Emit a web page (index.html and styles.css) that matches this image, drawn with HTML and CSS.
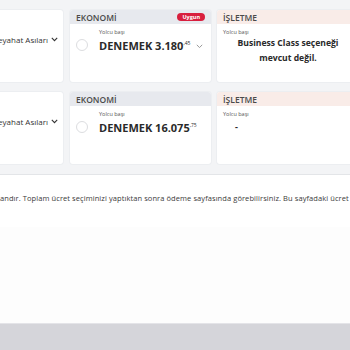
FILE: index.html
```html
<!DOCTYPE html>
<html lang="tr">
<head>
    <meta charset="UTF-8">
    <title>Uçuş Seçimi</title>
    <link rel="stylesheet" href="styles.css">
</head>
<body>
    <div class="fares">
        <div class="fare-row">
            <div class="flight-card">
                <span class="extras">Seyahat Asıları</span>
                <svg class="chev dark" width="7" height="5" viewBox="0 0 7 5"><path d="M0.8 0.8 L3.5 3.6 L6.2 0.8" fill="none" stroke="#333" stroke-width="1.1"/></svg>
            </div>
            <div class="fare-card">
                <div class="fare-head economy">
                    <span>EKONOMİ</span>
                    <span class="badge">Uygun</span>
                </div>
                <div class="fare-body">
                    <span class="radio"></span>
                    <div class="price-box">
                        <div class="per">Yolcu başı</div>
                        <div class="price">DENEMEK 3.180<sup>,45</sup></div>
                    </div>
                    <svg class="chev light" width="7" height="5" viewBox="0 0 7 5"><path d="M0.8 0.8 L3.5 3.6 L6.2 0.8" fill="none" stroke="#9a9a9a" stroke-width="1"/></svg>
                </div>
            </div>
            <div class="fare-card">
                <div class="fare-head business">
                    <span>İŞLETME</span>
                </div>
                <div class="fare-body column">
                    <div class="per">Yolcu başı</div>
                    <div class="unavailable">Business Class seçeneği mevcut değil.</div>
                </div>
            </div>
        </div>

        <div class="fare-row">
            <div class="flight-card">
                <span class="extras">Seyahat Asıları</span>
                <svg class="chev dark" width="7" height="5" viewBox="0 0 7 5"><path d="M0.8 0.8 L3.5 3.6 L6.2 0.8" fill="none" stroke="#333" stroke-width="1.1"/></svg>
            </div>
            <div class="fare-card">
                <div class="fare-head economy">
                    <span>EKONOMİ</span>
                </div>
                <div class="fare-body">
                    <span class="radio"></span>
                    <div class="price-box">
                        <div class="per">Yolcu başı</div>
                        <div class="price">DENEMEK 16.075<sup>,75</sup></div>
                    </div>
                </div>
            </div>
            <div class="fare-card">
                <div class="fare-head business">
                    <span>İŞLETME</span>
                </div>
                <div class="fare-body column">
                    <div class="per">Yolcu başı</div>
                    <div class="price empty">-</div>
                </div>
            </div>
        </div>
    </div>

    <div class="notice">
        <p>andır. Toplam ücret seçiminizi yaptıktan sonra ödeme sayfasında görebilirsiniz. Bu sayfadaki ücret</p>
    </div>
    <div class="filler"></div>
    <div class="footer"></div>
</body>
</html>
```

FILE: styles.css
```css
html, body {
    overflow: hidden;
}
body {
    margin: 0;
    height: 350px;
    display: flex;
    flex-direction: column;
    background-color: #f3f4f6;
    font-family: "Open Sans", Arial, sans-serif;
    color: #2f2f2f;
}
.fares {
    margin-left: -56px;
    padding: 10px 0 10px;
    display: flex;
    flex-direction: column;
    gap: 10px;
}
.fare-row {
    display: grid;
    grid-template-columns: 120px 141px 160px;
    column-gap: 6px;
    height: 72px;
}
.fare-row .flight-card {
    margin-right: 1px;
}
.flight-card, .fare-card {
    background: white;
    border-radius: 3px;
    box-shadow: 0 0 0 1px #eceef1;
    overflow: hidden;
}
.flight-card {
    display: flex;
    justify-content: flex-end;
    align-items: flex-start;
    gap: 3px;
    padding: 24px 5px 0 0;
}
.extras {
    font-size: 8px;
    line-height: 11px;
    color: #333;
}
.chev.dark {
    margin-top: 3px;
}
.fare-head {
    height: 14px;
    display: flex;
    align-items: center;
    justify-content: space-between;
    padding: 0 6px;
    font-size: 8.5px;
    font-weight: 600;
    color: #4a4a4a;
}
.fare-head.economy {
    background: #e7e9ee;
}
.fare-head.business {
    background: #f9ece8;
}
.badge {
    background: #d81f3e;
    color: white;
    font-size: 5.5px;
    font-weight: 700;
    line-height: 8px;
    padding: 0 5px;
    border-radius: 4px;
}
.fare-body {
    display: flex;
    align-items: flex-start;
    padding: 5px 8px 0 6px;
}
.fare-body.column {
    flex-direction: column;
}
.radio {
    width: 10px;
    height: 10px;
    border: 1px solid #dcdde0;
    border-radius: 50%;
    margin-top: 10px;
    flex-shrink: 0;
}
.price-box {
    margin-left: 11px;
}
.per {
    font-size: 5.5px;
    line-height: 7px;
    color: #555;
}
.price {
    margin-top: 1px;
    font-size: 11px;
    line-height: 13px;
    font-weight: 700;
    color: #2a2a2a;
    white-space: nowrap;
}
.price sup {
    font-size: 5px;
    font-weight: 400;
    vertical-align: 5px;
}
.price.empty {
    margin: 2px 0 0 12px;
    font-size: 9px;
}
.chev.light {
    margin: 15px 0 0 auto;
}
.unavailable {
    width: 124px;
    margin-left: 3px;
    text-align: center;
    font-size: 8.6px;
    line-height: 15px;
    font-weight: 700;
    color: #2a2a2a;
}
.notice {
    background: white;
    border-top: 1px solid #e3e5e8;
    height: 52px;
    box-shadow: 0 1px 2px rgba(0, 0, 0, 0.03);
}
.notice p {
    margin: 0;
    padding-top: 17px;
    font-size: 7.5px;
    letter-spacing: 0.08px;
    line-height: 12px;
    color: #3a3a3a;
    white-space: nowrap;
}
.filler {
    flex: 1;
    background: #fdfdfd;
}
.footer {
    height: 26px;
    background: #d5d5da;
    border-top: 1px solid #e4e4e8;
}
```
